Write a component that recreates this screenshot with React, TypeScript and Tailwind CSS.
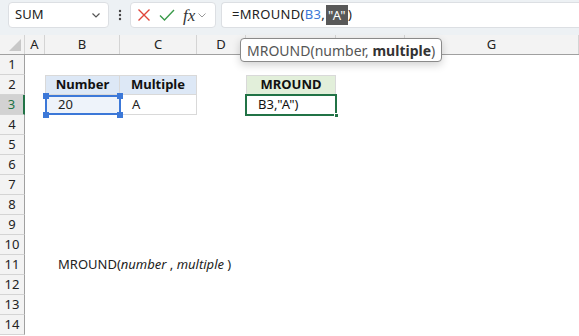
import React from "react";

const font = { fontFamily: '"Noto Sans", "Open Sans", sans-serif' };

const colWidths = [25, 20, 75, 77, 49, 90, 69, 174];
const colLabels = ["", "A", "B", "C", "D", "", "", "G"];

function Cell({ children, className = "" }: { children?: React.ReactNode; className?: string }) {
  return <div className={"h-[20px] flex items-center overflow-visible whitespace-nowrap " + className}>{children}</div>;
}

export default function App() {
  const rows = Array.from({ length: 14 }, (_, i) => i + 1);
  return (
    <div className="w-[579px] h-[336px] bg-white overflow-hidden relative text-[#222]" style={font}>
      {/* top bar */}
      <div className="h-[35px] bg-[#edf1f4] flex items-start pt-[2px] pl-[8px]">
        <div className="w-[101px] h-[26px] bg-white rounded-[4px] border border-[#dcdfe3] flex items-center justify-between pl-[6px] pr-[6px] text-[13px]">
          <span>SUM</span>
          <svg width="12" height="12" viewBox="0 0 12 12"><path d="M2.5 4.5 L6 8 L9.5 4.5" stroke="#555" strokeWidth="1.2" fill="none" /></svg>
        </div>
        <div className="w-[21px] h-[26px] flex items-center justify-center">
          <svg width="4" height="14" viewBox="0 0 4 14"><circle cx="2" cy="3" r="1.2" fill="#444" /><circle cx="2" cy="7" r="1.2" fill="#444" /><circle cx="2" cy="11" r="1.2" fill="#444" /></svg>
        </div>
        <div className="w-[86px] h-[26px] bg-white rounded-[4px] border border-[#dcdfe3] flex items-center pl-[6px] gap-[8px]">
          <svg width="14" height="14" viewBox="0 0 14 14"><path d="M1.5 1.5 L12.5 12.5 M12.5 1.5 L1.5 12.5" stroke="#e0453a" strokeWidth="1.4" /></svg>
          <svg width="16" height="14" viewBox="0 0 16 14"><path d="M1 7.5 L5.5 12 L15 2" stroke="#3a9a4a" strokeWidth="1.4" fill="none" /></svg>
          <span className="text-[17px] italic text-[#333] leading-none" style={{ fontFamily: '"Liberation Serif", serif' }}>fx</span>
          <svg width="10" height="10" viewBox="0 0 10 10" className="-ml-[6px]"><path d="M1.5 3.5 L5 7 L8.5 3.5" stroke="#999" strokeWidth="1" fill="none" /></svg>
        </div>
        <div className="ml-[5px] flex-1 h-[26px] bg-white rounded-l-[4px] border border-r-0 border-[#dcdfe3] flex items-center pl-[10px] text-[13px] tracking-[0.3px]">
          <span>=MROUND(</span>
          <span className="text-[#3c78d8]">B3</span>
          <span>,</span>
          <span className="bg-[#595959] text-white px-[2px] ml-[1px] leading-[20px]">"A"</span>
          <span>)</span>
        </div>
      </div>

      {/* column headers */}
      <div className="flex h-[20px] bg-[#f3f3f3] border-b border-[#a0a0a0] text-[13px]">
        {colWidths.map((w, i) => (
          <div
            key={i}
            style={{ width: w }}
            className="shrink-0 flex items-center justify-center border-r border-[#d4d4d4] relative"
          >
            {i === 0 ? (
              <svg width="12" height="12" viewBox="0 0 12 12" className="absolute right-[3px] bottom-[3px]"><path d="M12 0 L12 12 L0 12 Z" fill="#c8c8c8" /></svg>
            ) : (
              colLabels[i]
            )}
          </div>
        ))}
      </div>

      {/* rows */}
      <div className="flex flex-col">
        {rows.map((r) => (
          <div key={r} className="flex h-[20px]">
            <div
              className={
                "w-[25px] shrink-0 flex items-center justify-center text-[13px] border-b border-[#d4d4d4] " +
                (r === 3 ? "bg-[#d2d2d2] text-[#217346] border-r-2 border-r-[#217346]" : "bg-[#f3f3f3] border-r border-r-[#a0a0a0]")
              }
            >
              {r}
            </div>
            <div className="w-[20px] shrink-0" />
            {/* B */}
            <div className="w-[75px] shrink-0">
              {r === 2 && <Cell className="bg-[#dde8f6] border border-[#d9d9d9] justify-center font-bold text-[13px] text-[#111]">Number</Cell>}
              {r === 3 && <Cell className="bg-[#eef3fa] border-x border-b border-[#d9d9d9] pl-[12px] text-[13px]">20</Cell>}
              {r === 11 && (
                <Cell className="pl-[13px] text-[13px]">
                  MROUND(<i>number</i>&nbsp;,&nbsp;<i>multiple</i>&nbsp;)
                </Cell>
              )}
            </div>
            {/* C */}
            <div className="w-[77px] shrink-0">
              {r === 2 && <Cell className="bg-[#dde8f6] border-y border-r border-[#d9d9d9] justify-center font-bold text-[13px] text-[#111]">Multiple</Cell>}
              {r === 3 && <Cell className="border-b border-r border-[#d9d9d9] pl-[12px] text-[13px]">A</Cell>}
            </div>
            <div className="w-[49px] shrink-0" />
            {/* E */}
            <div className="w-[90px] shrink-0">
              {r === 2 && <Cell className="bg-[#e2efda] border border-[#d9d9d9] justify-center font-bold text-[13px] text-[#111]">MROUND</Cell>}
              {r === 3 && <Cell className="pl-[12px] text-[13px] text-[#111]">B3,"A")</Cell>}
            </div>
          </div>
        ))}
      </div>

      {/* B3 range highlight */}
      <div className="absolute left-[45px] top-[95px] w-[76px] h-[20px] border-2 border-[#3c78d8]" />
      {[
        [43, 93],
        [117, 93],
        [43, 112],
        [117, 112],
      ].map(([x, y], i) => (
        <div key={i} className="absolute w-[6px] h-[6px] bg-[#3c78d8]" style={{ left: x, top: y }} />
      ))}

      {/* E3 active cell */}
      <div className="absolute left-[245px] top-[94px] w-[92px] h-[22px] border-2 border-[#217346]" />
      <div className="absolute left-[334px] top-[113px] w-[5px] h-[5px] bg-[#217346] border border-white" />

      {/* tooltip */}
      <div className="absolute left-[240px] top-[38px] h-[24px] px-[6px] bg-white border border-[#8a8a8a] rounded-[4px] shadow-[0_3px_8px_rgba(0,0,0,0.18)] flex items-center text-[14px] text-[#555]">
        <span>MROUND(number,&nbsp;</span>
        <span className="font-bold text-[#333]">multiple</span>
        <span>)</span>
      </div>
    </div>
  );
}
